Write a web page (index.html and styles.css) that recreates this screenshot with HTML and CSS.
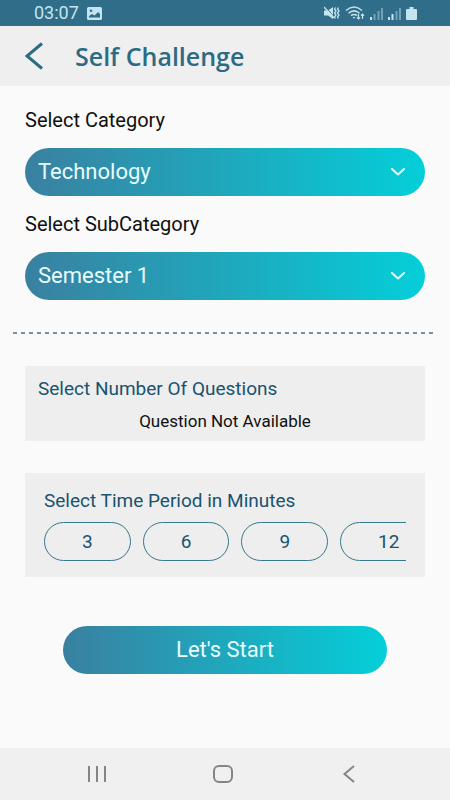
FILE: index.html
```html
<!DOCTYPE html>
<html lang="en">
<head>
<meta charset="utf-8">
<meta name="viewport" content="width=device-width, initial-scale=1">
<title>Self Challenge</title>
<link rel="stylesheet" href="styles.css">
</head>
<body>
<div class="status">
  <span class="clock">03:07</span>
  <svg width="15" height="13" viewBox="0 0 15 13"><path fill="currentColor" fill-rule="evenodd" d="M1.500 0h12a1.500 1.500 0 0 1 1.500 1.500v10a1.500 1.500 0 0 1-1.500 1.500h-12A1.500 1.500 0 0 1 0 11.500v-10A1.500 1.500 0 0 1 1.500 0zM2 10.500h11V7L11 5 7.500 8.500 5 7 2 9zM4 2.500a1.300 1.300 0 1 0 0 2.600 1.300 1.300 0 0 0 0-2.600z"/></svg>
  <div class="status-icons">
    <svg width="16" height="14" viewBox="0 0 16 14" fill="none" stroke="currentColor"><path fill="currentColor" stroke="none" d="M0 4.500h4L9 1v12L4 9.500H0z"/><path stroke="#306d88" d="M1 0l10 12"/><path stroke-width="1.300" d="M0 1l10 11M11.500 1.500l-1 1.500 1.500 2-1.500 2 1.500 2-1.500 2 1 1.500M14.500 1.500l-1 1.500 1.500 2-1.500 2 1.500 2-1.500 2 1 1.500"/></svg>
    <svg width="20" height="14" viewBox="0 0 20 14" fill="none" stroke="currentColor" stroke-width="1.500"><path d="M1 4.500q8-7 16 0M3.500 7.200q5.500-4.700 11 0M6 9.700q3-2.500 6 0"/><path fill="currentColor" stroke="none" d="M7.500 11h3L9 12.700z"/><path stroke-width="1.200" d="M13.500 8v5M12 11.500l1.500 1.500 1.500-1.500M17.500 13V8M16 9.500L17.500 8 19 9.500"/></svg>
    <svg width="13" height="13" viewBox="0 0 13 13" fill="currentColor"><path d="M0 10h2v3H0z"/><path opacity=".45" d="M3.500 7h2v6h-2zM7.500 4h2v9h-2zM11 1h2v12h-2z"/></svg>
    <svg width="13" height="13" viewBox="0 0 13 13" fill="currentColor"><path d="M0 10h2v3H0zM3.500 7h2v6h-2z"/><path opacity=".45" d="M7.500 4h2v9h-2zM11 1h2v12h-2z"/></svg>
    <svg width="11" height="13" viewBox="0 0 11 13" fill="currentColor"><path d="M3.500 0h4v2H10a1 1 0 0 1 1 1v9a1 1 0 0 1-1 1H1a1 1 0 0 1-1-1V3a1 1 0 0 1 1-1h2.500z"/></svg>
  </div>
</div>
<header class="bar">
  <button class="icon-button" type="button" aria-label="Back"><svg width="18" height="28" viewBox="0 0 18 28" fill="none" stroke="currentColor" stroke-width="3"><path d="M17 1.500L2 14l15 12.500"/></svg></button>
  <h1>Self Challenge</h1>
</header>
<main>
  <form class="picker">
    <label for="category">Select Category</label>
    <div class="select">
      <select id="category"><option>Technology</option></select>
      <svg class="chevron" width="14" height="8" viewBox="0 0 14 8" fill="none" stroke="currentColor" stroke-width="2" stroke-linecap="round" stroke-linejoin="round"><path d="M1 1l6 5.500L13 1"/></svg>
    </div>
    <label for="subcategory">Select SubCategory</label>
    <div class="select">
      <select id="subcategory"><option>Semester 1</option></select>
      <svg class="chevron" width="14" height="8" viewBox="0 0 14 8" fill="none" stroke="currentColor" stroke-width="2" stroke-linecap="round" stroke-linejoin="round"><path d="M1 1l6 5.500L13 1"/></svg>
    </div>
  </form>
  <hr class="divider">
  <section class="card questions">
    <h2>Select Number Of Questions</h2>
    <p>Question Not Available</p>
  </section>
  <section class="card time">
    <h2>Select Time Period in Minutes</h2>
    <div class="minutes">
      <button type="button">3</button>
      <button type="button">6</button>
      <button type="button">9</button>
      <button type="button">12</button>
    </div>
  </section>
  <button class="start" type="button">Let's Start</button>
</main>
<nav class="system">
  <button class="icon-button" type="button" aria-label="Recent apps"><svg width="20" height="18" viewBox="0 0 20 18" fill="none" stroke="currentColor" stroke-width="2"><path d="M2 1v16M10 1v16M18 1v16"/></svg></button>
  <button class="icon-button" type="button" aria-label="Home"><svg width="20" height="18" viewBox="0 0 20 18" fill="none" stroke="currentColor" stroke-width="2"><rect x="1" y="1" width="18" height="16" rx="5"/></svg></button>
  <button class="icon-button" type="button" aria-label="Back"><svg width="20" height="18" viewBox="0 0 20 18" fill="none" stroke="currentColor" stroke-width="2"><path d="M15 1L5.500 9l9.500 8"/></svg></button>
</nav>
</body>
</html>
```
FILE: styles.css
```css
* { box-sizing: border-box; }

body {
  margin: 0;
  min-height: 100vh;
  display: flex;
  flex-direction: column;
  background: #fafafa;
  color: #101010;
  font-family: Roboto, "Liberation Sans", sans-serif;
  font-size: 20px;
  line-height: 24px;
}

h1, h2, p { margin: 0; }

button, select { font: inherit; }

svg { display: block; flex: none; }

.status {
  display: flex;
  align-items: center;
  gap: 8px;
  height: 26px;
  padding: 0 33px 0 34px;
  background: #306d88;
  color: #c4e4ef;
}

.clock { font-size: 18px; }

.status-icons {
  display: flex;
  align-items: center;
  gap: 5px;
  margin-left: auto;
}

.bar {
  display: flex;
  align-items: center;
  gap: 32px;
  height: 60px;
  padding: 0 25px;
  background: #efefef;
  color: #2b6b84;
}

.bar h1 {
  font-family: "Open Sans", "Noto Sans", sans-serif;
  font-size: 25px;
  font-weight: 600;
}

.icon-button {
  padding: 0;
  border: 0;
  background: none;
  color: inherit;
}

main {
  flex: 1;
  display: flex;
  flex-direction: column;
}

.picker {
  display: flex;
  flex-direction: column;
  gap: 16px;
  padding: 22px 25px 0;
}

.select {
  position: relative;
  display: grid;
}

.select select,
.start {
  height: 48px;
  border: 0;
  border-radius: 24px;
  background: linear-gradient(90deg, #3a80a0, #04cfd9);
  color: #e8fcff;
  font-size: 22px;
}

.select select {
  appearance: none;
  padding: 0 48px 0 13px;
}

.chevron {
  position: absolute;
  right: 20px;
  top: 20px;
  color: #e8fcff;
  pointer-events: none;
}

.divider {
  align-self: stretch;
  height: 2px;
  margin: 32px 15px 32px 13px;
  border: 0;
  background: repeating-linear-gradient(90deg, #7593a0 0 4px, transparent 4px 8px);
}

.card {
  margin: 0 25px 32px;
  background: #eee;
}

.card h2 {
  color: #195370;
  font-size: 19px;
  font-weight: 400;
}

.questions { padding: 11px 13px 8px; }

.questions p {
  margin-top: 8px;
  font-size: 17px;
  text-align: center;
}

.time { padding: 16px 19px; }

.minutes {
  display: flex;
  gap: 12px;
  margin-top: 9px;
  overflow: hidden;
}

.minutes button {
  flex: none;
  height: 39px;
  padding: 0 37px;
  border: 1px solid #36788c;
  border-radius: 20px;
  background: none;
  color: #195370;
  font-size: 19px;
}

.start {
  margin: 17px 63px 32px;
}

.system {
  display: flex;
  align-items: center;
  justify-content: space-between;
  height: 52px;
  padding: 0 91px 0 87px;
  background: #f0f0f0;
  color: #858585;
}
```
